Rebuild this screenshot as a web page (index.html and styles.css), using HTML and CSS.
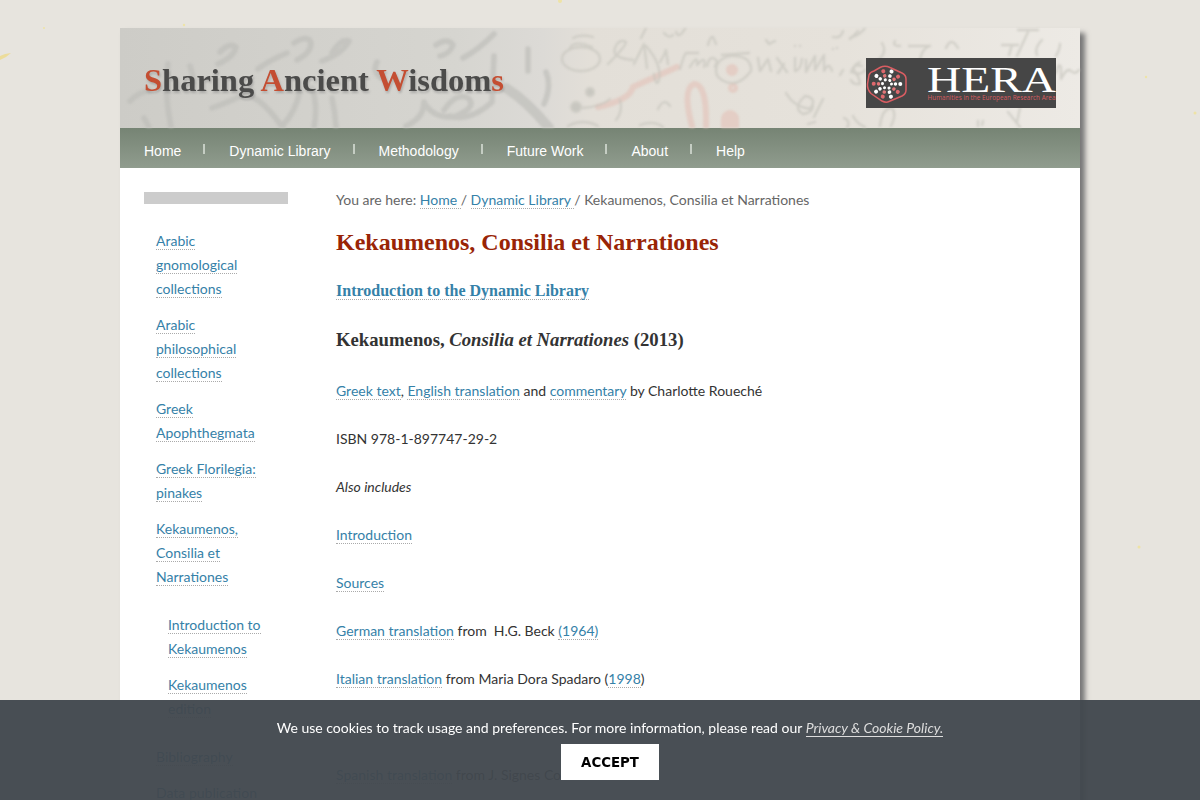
FILE: index.html
```html
<!DOCTYPE html>
<html lang="en">
<head>
<meta charset="utf-8">
<title>Kekaumenos, Consilia et Narrationes</title>
<link rel="stylesheet" href="styles.css">
</head>
<body>
<svg class="paper" viewBox="0 0 1200 800" aria-hidden="true">
  <path d="M0 56l5-2 6-1-5 4-6 3z" fill="#ecdc9a"/>
  <g fill="#eee3a6"><circle cx="44" cy="28" r="1"/><circle cx="184" cy="25" r="1.2"/><circle cx="560" cy="1" r="2"/><circle cx="1146" cy="77" r="1.2"/><circle cx="1195" cy="113" r="1.5"/><circle cx="1139" cy="547" r="1.5"/></g>
</svg>
<div class="page">
  <header class="banner">
    <svg class="script" viewBox="0 0 960 100" aria-hidden="true">
      <g class="ink-wide">
        <path d="M98 36q16-7 18-17q-7-5-16 5M138 41q10-8 29-16M174 15q14-9 17 0q0 10-14 17M202 33q20-7 27-20q-8-3-17 12M316 17q12-8 17 0q-3 9-13 11M343 30q15-8 31-24"/>
        <path d="M48 36q-4 30 3 62M70 38q3 10 4 16M10 73q10-10 20-10M24 90l5 9M92 80q18-6 40-18M134 70q12 6 29 30M180 62q-4 22-18 36M192 60q6 18 2 39M212 70q3 14 4 29M257 34q-5 10 4 16"/>
        <path d="M286 98q18-8 18-24q8 16 30 15q24-10 14-19q-12-6-24 12M330 88q20 6 42-14l2-46M408 21v22M426 44q6 14-2 32"/>
        <path class="bold" d="M386 60q22 14 43 40"/>
      </g>
      <g class="rubric">
        <path d="M478 79q32-7 35-20l44-20M572 98q-10-37 2-42q13 0 12 42"/><circle cx="612" cy="42" r="3"/><circle cx="613" cy="60" r="2"/><path d="M610 88v8"/><path class="bold" d="M610 91v6"/>
      </g>
      <g class="ink-mid">
        <ellipse cx="461" cy="31" rx="19" ry="12"/><path d="M450 20q4-8 22-1M453 10q8-4 20-1M488 36q18-18 18-22q-7-4-11 6t18 12M514 36l10-20 3 24M526 18q16 18 13 34q-3 8-5-6M540 34q4-6 6-12l2 14M560 41q4-14 6-16h12M570 39q8-14 7-2q10-11 7 2M587 38q3-13 10-5l-2 6"/>
        <path d="M596 43q0-12 14-15q22-1 21 15q-12 16-25 11q-10-4-10-11M602 27l27-2M638 30l2 13 8-12 3 12M657 30l10 14M664 36l-6 9M675 30v13q6-1 7-12M686 32v12l9-16v14l9-15v16q5-10 8 0M723 42l-3 5M740 34q-9 4-5 10q5 4 10-2M521 10l5-10M544 5q5 6 9 2M556 4q3 8 10-5M588 17q2-9 5-8l3 7M646 12l3 4 6-3M713 9q8 2 10-6M730 11l8-8M675 18v.1M680 18v.1M713 21v.1M717 20v.1"/>
        <path d="M666 65q8 14 24 16q8-11-5-13q-13 12-2 18q9-1 10-8M703 71l-9 18M538 81q6-12 12-3M500 72q3 12-4 20M688 96l7-2M724 90q7 3 3 10"/>
        <path d="M730 10q10-3 15-10M757 33q11-8 5-18M775 13q-3 5 5 5M789 18h21q-8 2-10 14M826 20q5-12 12 0M882 17h16M892 17l-3 10M898 2h20M908 4l-11 24M922 12q-8 8-5 15M940 16q0 5-4 12M936 45q3-12 5-5v11q6-12 10-8t8-1M742 38q-8-3-11 6q8 0 9 12q-7 1-9-4M733 88q4 8 12 11M760 98q2-18 12-18q5 6-1 18M888 84l12 15M900 80l-3 14M858 98v-5M862 97l1-4"/>
        <circle class="dot" cx="470" cy="64" r="4"/><circle class="dot" cx="456" cy="79" r="5"/><path d="M490 71q-9 8-28 9M448 98q15-8 30 0M520 97q14-5 23 2"/>
      </g>
    </svg>
    <h1 class="title"><svg width="376" height="48" viewBox="0 0 376 48"><text x="0" y="33" textLength="360" lengthAdjust="spacingAndGlyphs"><tspan class="cap">S</tspan>haring <tspan class="cap">A</tspan>ncient <tspan class="cap">W</tspan>isdom<tspan class="cap">s</tspan></text></svg></h1>
    <svg class="hera" viewBox="0 0 190 50" role="img" aria-label="HERA">
      <rect width="190" height="50" fill="#464646"/>
      <path d="M14 9.500Q19 7 24 9.500L36 15Q40 17 40 21V32Q40 36 36 38L23 43.500Q20 45 16 43L5 35.500Q1 31 1.500 26L3 17Q4 14 8 13Z" fill="none" stroke="#d95d62" stroke-width="1.5"/>
      <g fill="none" stroke-width="4" stroke-linecap="round">
        <circle cx="21" cy="26" r="4.500" stroke="#fff" stroke-width="3" stroke-dasharray=".1 4.612"/>
        <circle cx="21" cy="26" r="8.500" stroke="#fff" stroke-width="3.500" stroke-dasharray=".1 10.58"/><circle cx="21" cy="26" r="8.500" stroke="#e17779" stroke-width="3.500" stroke-dasharray=".1 10.58" stroke-dashoffset="-5.3"/>
        <circle cx="21" cy="26" r="13.300" stroke="#fff" stroke-dasharray=".1 16.61"/><circle cx="21" cy="26" r="13.300" stroke="#df686d" stroke-dasharray=".1 16.61" stroke-dashoffset="-8.300"/>
      </g>
      <text class="hera-name" x="61" y="34" textLength="129" lengthAdjust="spacingAndGlyphs">HERA</text>
      <text class="hera-sub" x="61.500" y="42" textLength="128" lengthAdjust="spacingAndGlyphs">Humanities in the European Research Area</text>
    </svg>
  </header>
  <nav class="menu"><a>Home</a><a>Dynamic Library</a><a>Methodology</a><a>Future Work</a><a>About</a><a>Help</a></nav>
  <div class="columns">
    <aside class="side">
      <div class="bar"></div>
      <ul>
        <li><a>Arabic gnomological collections</a></li>
        <li><a>Arabic philosophical collections</a></li>
        <li><a>Greek Apophthegmata</a></li>
        <li><a>Greek Florilegia: pinakes</a></li>
        <li><a>Kekaumenos, Consilia et Narrationes</a>
          <ul class="sub"><li><a>Introduction to Kekaumenos</a></li><li><a>Kekaumenos edition</a></li></ul></li>
        <li><a>Bibliography</a></li>
        <li><a>Data publication</a></li>
      </ul>
    </aside>
    <main class="content">
      <p class="crumbs">You are here: <a>Home&nbsp;</a>/ <a>Dynamic Library&nbsp;</a>/ Kekaumenos, Consilia et Narrationes</p>
      <h2>Kekaumenos, Consilia et Narrationes</h2>
      <h4><a>Introduction to the Dynamic Library</a></h4>
      <h3>Kekaumenos, <em>Consilia et Narrationes</em> (2013)</h3>
      <p><a>Greek text</a>, <a>English translation</a> and <a>commentary</a> by Charlotte Roueché</p>
      <p>ISBN 978-1-897747-29-2</p>
      <p><em>Also includes</em></p>
      <p><a>Introduction</a></p>
      <p><a>Sources</a></p>
      <p><a>German translation</a> from&nbsp; H.G. Beck <a>(1964)</a></p>
      <p><a>Italian translation</a> from Maria Dora Spadaro (<a>1998</a>)</p>
      <p></p>
      <p><a>Spanish translation</a> from J. Signes Codoñer</p>
    </main>
  </div>
</div>
<div class="cookies">
  <p>We use cookies to track usage and preferences. For more information, please read our <a>Privacy &amp; Cookie Policy.</a></p>
  <button>ACCEPT</button>
</div>
</body>
</html>
```
FILE: styles.css
```css
* { box-sizing: border-box; }
html, body { height: 800px; overflow: hidden; }
body { margin: 0; padding-top: 28px; background: #e7e4de; color: #333; font: 14px/24px Lato, sans-serif; }
.paper { position: absolute; left: 0; top: 0; width: 1200px; height: 800px; }
.page { position: relative; width: 960px; height: 772px; margin: 0 auto; background: #fff; box-shadow: 5px 5px 5px #777; }
.banner { position: relative; display: flex; justify-content: space-between; align-items: flex-start; height: 100px; padding: 30px 24px 0; background: linear-gradient(90deg, #cdccc7, #d6d5d0 35%, #dcdad6 44%, #e3dfd8 49%, #e6e2db 75%, #edeae5); }
.script { position: absolute; left: 0; top: 0; width: 960px; height: 100px; fill: none; stroke-linecap: round; stroke-linejoin: round; filter: blur(.8px); }
.ink-wide { stroke: #bdbdb9; stroke-width: 5.5; opacity: .65; }
.ink-wide .bold { stroke-width: 10; }
.ink-mid { stroke: #c6c5bd; stroke-width: 2.3; opacity: .65; }
.dot { fill: #bbbab4; }
.rubric { stroke: #e3c4ba; stroke-width: 6; opacity: .65; }
.rubric .bold { stroke-width: 18; }
.title { position: relative; margin: 0; height: 48px; }
.title svg { display: block; overflow: visible; }
.title text { font: 700 32px "Liberation Serif", serif; fill: #4b4b4a; filter: drop-shadow(1px 2px 1px #8888); }
.title .cap { fill: #c44e32; }
.hera { position: relative; width: 190px; height: 50px; }
.hera-name { font: 35px "Liberation Serif", serif; fill: #fff; }
.hera-sub { font: 6.5px "Open Sans", sans-serif; fill: #d65c60; }
.menu { display: flex; height: 40px; padding: 11px 24px 0; background: linear-gradient(#768474, #909c8e); color: #fff; font: 14px/24px "Liberation Sans", sans-serif; }
.menu a + a { margin-left: 22px; padding-left: 26px; background: linear-gradient(#c5cdc3, #c5cdc3) 0 5px / 2px 10px no-repeat; }
.columns { display: flex; gap: 48px; height: 632px; padding: 24px 24px 0; overflow: hidden; }
.side { width: 144px; }
.bar { height: 12px; background: #ccc; }
.side ul { margin: 0; padding: 0; list-style: none; }
.side > ul { padding: 25px 24px 0 12px; }
.side li { margin-bottom: 12px; }
.side .sub { width: 108px; margin: 24px 0; padding-left: 12px; }
.side .sub li:last-child { margin-bottom: 0; }
.side a, .content a { color: #3581a8; border-bottom: 1px dotted #aaa; }
.content { width: 720px; }
.content p { margin: 0; height: 48px; }
.content .crumbs { height: 36px; margin-top: -4px; color: #666; }
h2, h3, h4 { margin: 0; font-family: "Liberation Serif", serif; }
h2 { height: 55px; font-size: 24px; line-height: 36px; color: #992406; }
h4 { height: 49px; font-size: 16px; line-height: 24px; }
h3 { height: 51px; font-size: 18.72px; line-height: 24px; }
.cookies { position: fixed; left: 0; right: 0; bottom: 0; display: flex; flex-direction: column; align-items: center; height: 100px; padding: 16px 0 0 20px; background: rgba(66, 72, 78, .96); color: #fff; }
.cookies p { margin: 0 0 4px; }
.cookies a { font-style: italic; color: #ddd; border-bottom: 1px solid #ddd; }
.cookies button { width: 98px; height: 36px; padding: 0; border: 0; background: #fff; color: #000; font: 700 13.333px "DejaVu Sans", sans-serif; }
```
